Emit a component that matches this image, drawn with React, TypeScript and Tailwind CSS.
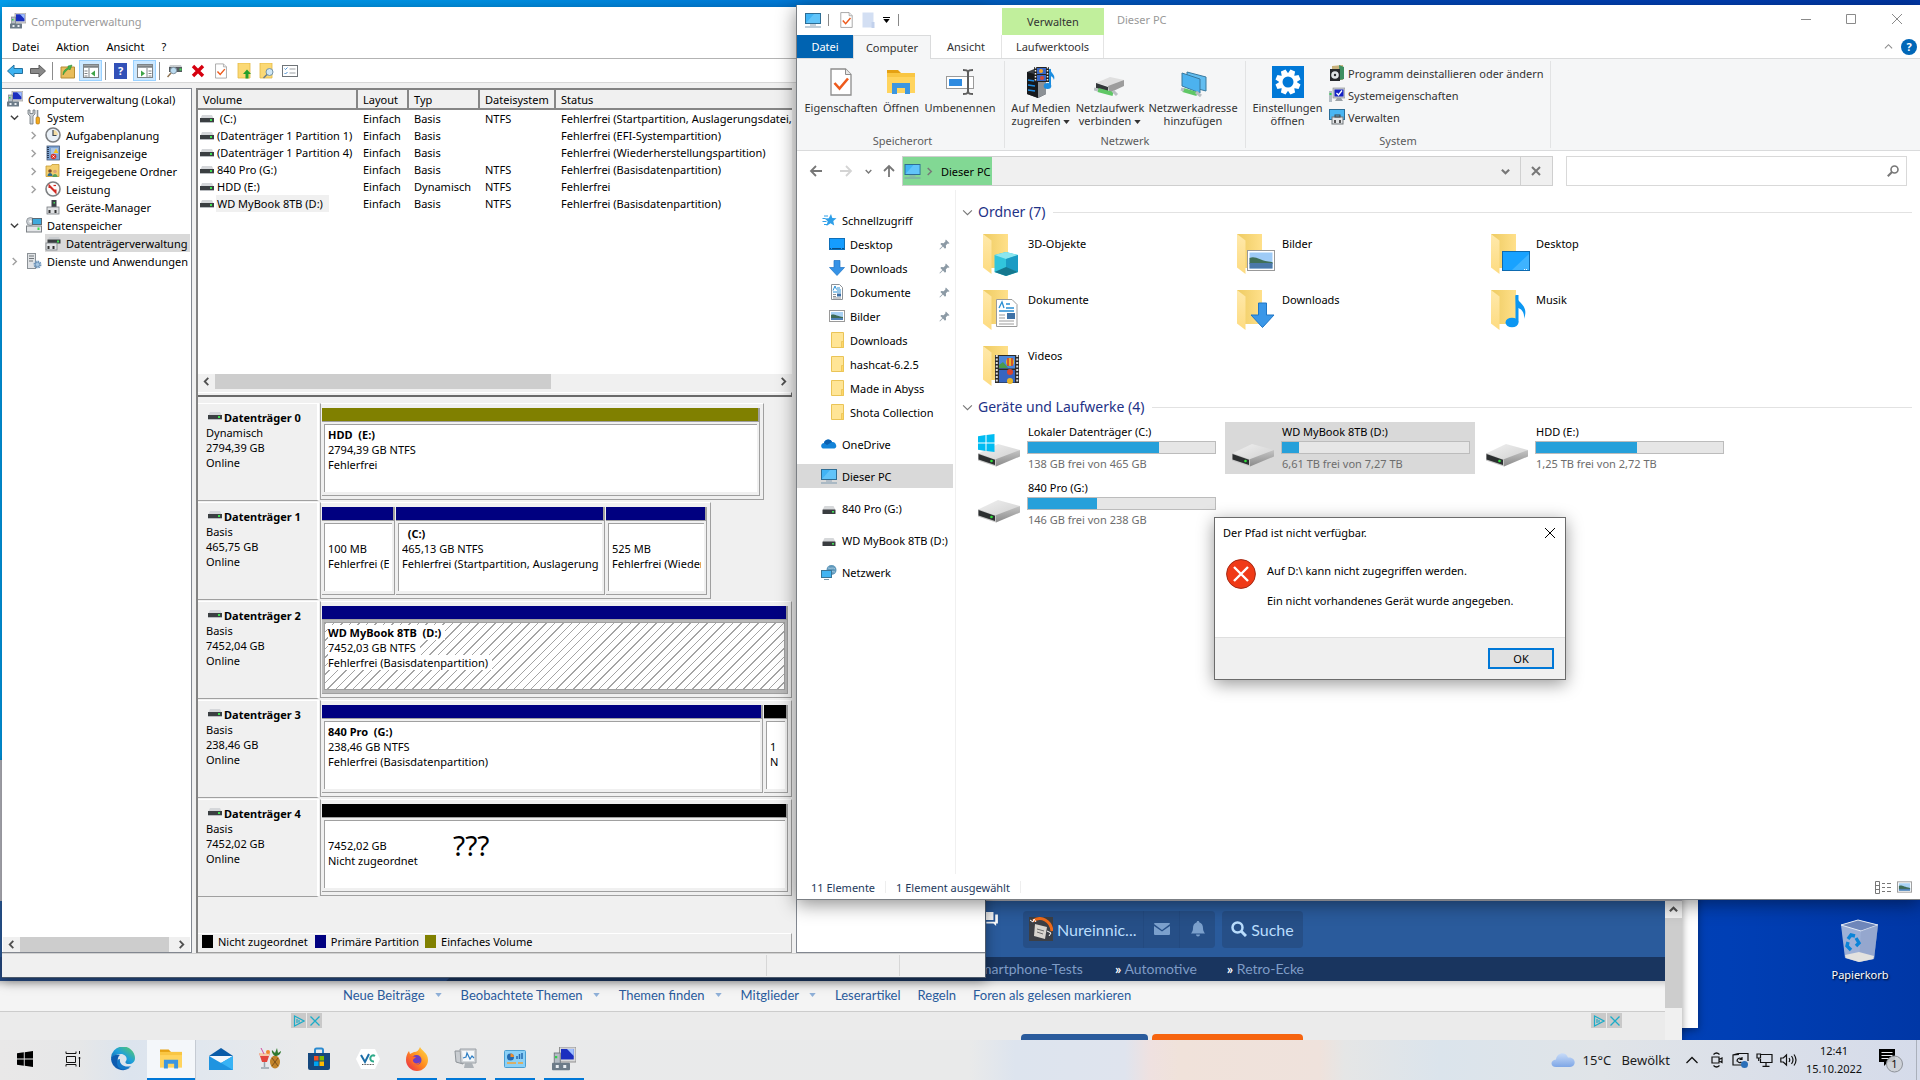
import type { ReactNode } from "react";

/* ---------- small shared icons ---------- */

type P = { className?: string };

const MiniDrive = ({ className = "" }: P) => (
  <svg viewBox="0 0 14 10" className={`h-[10px] w-[14px] shrink-0 ${className}`} aria-hidden="true">
    <path d="M2 1h10l1.500 3.500H.5z" fill="#d5d7da" />
    <rect x="0" y="4" width="14" height="4" fill="#3b3f42" />
    <rect x="0" y="8" width="14" height="1" fill="#b9bcc0" />
    <rect x="10" y="5" width="2" height="2" fill="#3fe052" />
  </svg>
);

const SmallDrive = ({ className = "" }: P) => (
  <svg viewBox="0 0 16 16" className={`h-4 w-4 shrink-0 ${className}`} aria-hidden="true">
    <path d="M3.500 6h9l2 4h-13z" fill="#d6d8da" />
    <rect x="1.500" y="9.500" width="13" height="4.500" rx=".6" fill="#3a3d40" />
    <rect x="11" y="11" width="2" height="1.600" fill="#43e05a" />
  </svg>
);

const BigDrive = ({ windows = false }: { windows?: boolean }) => (
  <svg viewBox="0 0 48 48" className="h-12 w-12 shrink-0" aria-hidden="true">
    <defs>
      <linearGradient id="dtop" x1="0" y1="0" x2="1" y2="1">
        <stop offset="0" stopColor="#f1f1f1" />
        <stop offset="1" stopColor="#cfcfcf" />
      </linearGradient>
      <linearGradient id="dside" x1="0" y1="0" x2="0" y2="1">
        <stop offset="0" stopColor="#c4c4c4" />
        <stop offset="1" stopColor="#8b8b8b" />
      </linearGradient>
    </defs>
    <path d="M2 31.500 22 22l22 6-19.500 11z" fill="url(#dtop)" />
    <path d="M19 37.500 44 28v6.500L20 44.500z" fill="url(#dside)" />
    <path d="M2 31l18 6.500v7L2 38.500z" fill="#c6c6c6" />
    <path d="M2.500 32l16.500 5.700v5.300L2.500 37.500z" fill="#2c2f30" />
    <circle cx="15.500" cy="39" r="1.300" fill="#2ee03a" />
    {windows && (
      <path d="M2 14.200l7.500-1.200v7.500H2zM10.500 12.900 18.500 12v8.500h-8zM2 21.500h7.500V29L2 27.800zM10.500 21.500h8V30l-8-1z" fill="#00bcf2" />
    )}
  </svg>
);

const Monitor = ({ className = "h-4 w-4" }: P) => (
  <svg viewBox="0 0 16 16" className={`shrink-0 ${className}`} aria-hidden="true">
    <rect x=".5" y="1.500" width="15" height="10" fill="#41b4f5" stroke="#2e6d94" />
    <path d="M1 11 9 2h6v9z" fill="#6fcbfb" opacity=".7" />
    <rect x="5" y="12.500" width="6" height="1" fill="#8ba2b5" />
    <rect x="0" y="14.500" width="16" height="1" fill="#7d99b0" />
  </svg>
);

const ComputerMgmt = ({ className = "h-4 w-4" }: P) => (
  <svg viewBox="0 0 16 16" className={`shrink-0 ${className}`} aria-hidden="true">
    <rect x="5" y="0" width="11" height="10" fill="#d9d9d9" stroke="#8a8a8a" strokeWidth=".6" />
    <rect x="6" y="1.300" width="8.500" height="7" fill="#1b2fbf" />
    <path d="M10 1.300h4.500V6z" fill="#9fc0ff" />
    <rect x="1.500" y="4" width="4" height="7" fill="#b4bcc4" stroke="#6d757c" strokeWidth=".6" />
    <rect x="2" y="6" width="1.500" height="1.500" fill="#32d14a" />
    <rect x="0" y="10.500" width="12" height="5" rx=".6" fill="#6c7b88" />
    <rect x="2.500" y="12" width="2" height="2" fill="#e9eef2" />
    <rect x="7.500" y="12" width="2" height="2" fill="#e9eef2" />
  </svg>
);

const Folder = ({ className = "h-4 w-4" }: P) => (
  <svg viewBox="0 0 16 16" className={`shrink-0 ${className}`} aria-hidden="true">
    <path d="M2.500.5h12v15h-12z" fill="#ffe596" stroke="#eac457" />
    <path d="M12.500 9.500h2v6h-2z" fill="#ffd767" stroke="#eac457" strokeWidth=".8" />
  </svg>
);

const BigFolder = ({ children }: { children: ReactNode }) => (
  <svg viewBox="0 0 48 48" className="h-12 w-12 shrink-0" aria-hidden="true">
    <defs>
      <linearGradient id="fback" x1="0" y1="0" x2="1" y2="0">
        <stop offset="0" stopColor="#eecb62" />
        <stop offset="1" stopColor="#ffe08a" />
      </linearGradient>
      <linearGradient id="ffront" x1="0" y1="0" x2="0" y2="1">
        <stop offset="0" stopColor="#ffe9ab" />
        <stop offset="1" stopColor="#fddb80" />
      </linearGradient>
    </defs>
    <path d="M7 4h25v34H12z" fill="url(#fback)" />
    <path d="M7 4l8.500 6.500V44L7 37.500z" fill="url(#ffront)" />
    {children}
  </svg>
);

const ArrowDown = ({ className = "h-4 w-4" }: P) => (
  <svg viewBox="0 0 16 16" className={`shrink-0 ${className}`} aria-hidden="true">
    <path d="M5 .5h6v7h4.500L8 15.500.5 7.500H5z" fill="#3592e6" stroke="#1d73c4" strokeWidth=".7" />
  </svg>
);

const Picture = ({ className = "h-4 w-4" }: P) => (
  <svg viewBox="0 0 16 16" className={`shrink-0 ${className}`} aria-hidden="true">
    <rect x=".5" y="2.500" width="15" height="11" fill="#fff" stroke="#9a9a9a" />
    <rect x="2" y="4" width="12" height="8" fill="#a9d2f5" />
    <path d="M2 7c3-1.500 5 1 12 2v1.500H2z" fill="#3e6b56" />
    <rect x="2" y="10" width="12" height="2" fill="#4f81b5" />
  </svg>
);

const DocIcon = ({ className = "h-4 w-4" }: P) => (
  <svg viewBox="0 0 16 16" className={`shrink-0 ${className}`} aria-hidden="true">
    <path d="M2.500.5h8l3 3v12h-11z" fill="#fff" stroke="#8d9297" />
    <path d="M4 6.500 6 2l1.500 3.500M8 4h3M8 6h4M4 8h8" stroke="#2a8fd4" fill="none" />
    <path d="M4 10.500h3M4 12.500h3M4 14h8" stroke="#8d9297" />
    <rect x="8" y="9.500" width="4" height="3" fill="#3a6ea5" />
  </svg>
);

const DesktopIcon = ({ className = "h-4 w-4" }: P) => (
  <svg viewBox="0 0 16 16" className={`shrink-0 ${className}`} aria-hidden="true">
    <rect x=".5" y="2.500" width="15" height="11" fill="#159dff" stroke="#0f6fb8" />
    <path d="M1 12.500h14" stroke="#0b4f86" strokeDasharray="1 1 8 0" />
  </svg>
);

const CheckDoc = ({ className = "h-4 w-4" }: P) => (
  <svg viewBox="0 0 22 28" className={`shrink-0 ${className}`} aria-hidden="true">
    <path d="M1 1h14.500L21 6.500V27H1z" fill="#fff" stroke="#8d8d8d" strokeWidth="1.300" />
    <path d="M15.500 1v5.500H21" fill="#e8e8e8" stroke="#8d8d8d" />
    <path d="M4.500 15l5 5.500L18 10.500" fill="none" stroke="#ee5a1c" strokeWidth="2.600" />
  </svg>
);

const Pin = () => (
  <svg viewBox="0 0 12 12" className="h-[11px] w-[11px] shrink-0" aria-hidden="true">
    <path d="M7.500.5l4 4-1.200.6-.8-.2-2 2 .2 2.600-1.200 1L4.300 8.300 1 11.500l-.5-.5 3.200-3.300-2.200-2.200 1-1.200 2.600.2 2-2-.2-.8z" fill="#8c9aa5" />
  </svg>
);

const Chevron = ({ dir, className = "h-[9px] w-[9px]" }: { dir: "right" | "down" | "left" | "up"; className?: string }) => {
  const d = { right: "M3 1l4 4-4 4", left: "M7 1L3 5l4 4", down: "M1 3l4 4 4-4", up: "M1 7l4-4 4 4" }[dir];
  return (
    <svg viewBox="0 0 10 10" className={`shrink-0 ${className}`} fill="none" stroke="currentColor" strokeWidth="1.600" aria-hidden="true">
      <path d={d} />
    </svg>
  );
};

const Caret = ({ className = "" }: P) => (
  <svg viewBox="0 0 8 5" className={`inline-block h-1 w-[7px] shrink-0 ${className}`} aria-hidden="true">
    <path d="M0 0h8L4 5z" fill="currentColor" />
  </svg>
);

/* ---------- scroll bar ---------- */

const HScroll = ({ thumb, className = "" }: { thumb: string; className?: string }) => (
  <div className={`flex h-[15px] shrink-0 items-stretch bg-[#f0f0f0] text-[#505050] ${className}`}>
    <button aria-label="Nach links" className="flex w-[17px] items-center justify-center"><Chevron dir="left" className="h-[9px] w-[9px] [stroke-width:2]" /></button>
    <div className="flex-1"><div className={`h-full bg-[#cdcdcd] ${thumb}`} /></div>
    <button aria-label="Nach rechts" className="flex w-[17px] items-center justify-center"><Chevron dir="right" className="h-[9px] w-[9px] [stroke-width:2]" /></button>
  </div>
);

/* ---------- Computerverwaltung ---------- */

const treeIcons: Record<string, ReactNode> = {
  system: (
    <svg viewBox="0 0 16 16" className="h-4 w-4 shrink-0"><path d="M2 1v4l2 2v8h3V7l2-2V1L7 1v3.500H4V1z" fill="#c9ced2" stroke="#6f767c" strokeWidth=".8" /><path d="M11.500 1v7" stroke="#8a9096" strokeWidth="1.600" /><rect x="10" y="8" width="3.500" height="7" rx="1.200" fill="#f3a81c" stroke="#a96c05" strokeWidth=".6" /></svg>
  ),
  clock: (
    <svg viewBox="0 0 16 16" className="h-4 w-4 shrink-0"><circle cx="8" cy="8" r="7" fill="#e9f0f7" stroke="#7c7f82" strokeWidth="1.600" /><path d="M8 8h5A5 5 0 0 0 8 3z" fill="#f3dca4" /><path d="M8 3v5.500h3.500" stroke="#404a55" fill="none" strokeWidth="1.200" /></svg>
  ),
  event: (
    <svg viewBox="0 0 16 16" className="h-4 w-4 shrink-0"><rect x="2" y="1" width="12.500" height="14" fill="#7da4d3" stroke="#44597a" strokeWidth=".8" /><path d="M3 2v12" stroke="#283c58" strokeWidth="2" strokeDasharray="1 1" /><path d="M6 4h7M6 6h7M6 8h7" stroke="#d8e7f8" /><path d="M11 3.500l2.500 4.500h-5z" fill="#f6c21c" /><circle cx="8.500" cy="11.500" r="2.800" fill="#d9352c" /><path d="M7.500 10.500l2 2m0-2l-2 2" stroke="#fff" strokeWidth=".9" /></svg>
  ),
  shared: (
    <svg viewBox="0 0 16 16" className="h-4 w-4 shrink-0"><path d="M1 3h5l1-1.500h7v12H1z" fill="#f4cf6e" stroke="#c79a30" strokeWidth=".8" /><circle cx="5" cy="8" r="1.800" fill="#7c4d2c" /><path d="M2.500 13c0-4 5-4 5 0z" fill="#2f6d8f" /><circle cx="10" cy="8.500" r="1.800" fill="#d8a577" /><path d="M7.500 14c0-4 5-4 5 0z" fill="#58a05c" /></svg>
  ),
  perf: (
    <svg viewBox="0 0 16 16" className="h-4 w-4 shrink-0"><circle cx="8" cy="8" r="7" fill="#fbfbfb" stroke="#7c7f82" strokeWidth="1.600" /><path d="M4.500 7V5L10.500 11V8.500" stroke="#d12a23" strokeWidth="2" fill="none" /><path d="M8.500 4.500h2.500" stroke="#d12a23" strokeWidth="1.200" /></svg>
  ),
  device: (
    <svg viewBox="0 0 16 16" className="h-4 w-4 shrink-0"><rect x="6.500" y="1" width="5" height="7" fill="#3b4146" /><rect x="8.500" y="3" width="1.500" height="1.500" fill="#43df57" /><rect x="2" y="8" width="12" height="7" fill="#dfe1e3" stroke="#74797e" strokeWidth=".8" /><path d="M4.500 11v3M10.500 11v3" stroke="#333" strokeWidth="2" /></svg>
  ),
  storage: (
    <svg viewBox="0 0 16 16" className="h-4 w-4 shrink-0"><circle cx="4.500" cy="4.500" r="4" fill="#c7ccd1" stroke="#7b8288" strokeWidth=".7" /><circle cx="4.500" cy="4.500" r="1.200" fill="#fff" /><rect x="6.500" y="1.500" width="9" height="6" fill="#3fa9dc" stroke="#5b6a76" /><rect x=".5" y="9" width="15" height="6" fill="#e4e6e8" stroke="#7c8186" /><rect x="11.500" y="10.500" width="2" height="2.500" fill="#3ddc4f" /></svg>
  ),
  disk: (
    <svg viewBox="0 0 16 16" className="h-4 w-4 shrink-0"><path d="M4 2h10l1 2.500H3z" fill="#c9cccf" /><rect x="2.500" y="4.500" width="13" height="4" fill="#3a3e41" /><rect x="12" y="5.500" width="2" height="2" fill="#43df57" /><rect x="1" y="8" width="11" height="7" fill="#e2e4e6" stroke="#7c8186" strokeWidth=".8" /><path d="M3.500 11v3M8.500 11v3" stroke="#333" strokeWidth="2" /></svg>
  ),
  services: (
    <svg viewBox="0 0 16 16" className="h-4 w-4 shrink-0"><rect x="1.500" y=".5" width="8" height="15" fill="#e0e3e6" stroke="#8b9196" /><path d="M3 3h5M3 5.500h5M3 8h4" stroke="#70767b" /><circle cx="11.500" cy="11.500" r="3" fill="none" stroke="#6d95bb" strokeWidth="2" strokeDasharray="1.500 .8" /><circle cx="11.500" cy="11.500" r="2.200" fill="#a8c7e2" stroke="#6d95bb" /></svg>
  ),
};

type TreeRow = { label: string; icon: string; level: 1 | 2; open?: boolean; closed?: boolean; active?: boolean };
const tree: TreeRow[] = [
  { label: "System", icon: "system", level: 1, open: true },
  { label: "Aufgabenplanung", icon: "clock", level: 2, closed: true },
  { label: "Ereignisanzeige", icon: "event", level: 2, closed: true },
  { label: "Freigegebene Ordner", icon: "shared", level: 2, closed: true },
  { label: "Leistung", icon: "perf", level: 2, closed: true },
  { label: "Geräte-Manager", icon: "device", level: 2 },
  { label: "Datenspeicher", icon: "storage", level: 1, open: true },
  { label: "Datenträgerverwaltung", icon: "disk", level: 2, active: true },
  { label: "Dienste und Anwendungen", icon: "services", level: 1, closed: true },
];

const Tree = () => (
  <nav className="flex w-[190px] shrink-0 flex-col border border-l-0 border-[#828790] bg-white pl-px pr-px pt-px">
    <ul className="flex-1 overflow-hidden whitespace-nowrap">
      <li className="flex h-[18px] items-center gap-[5px] pl-1"><ComputerMgmt />Computerverwaltung (Lokal)</li>
      {tree.map((r) => (
        <li key={r.label} className={`flex h-[18px] items-center ${r.level === 2 ? "pl-[19px]" : ""}`}>
          <span className="flex w-[23px] shrink-0 justify-center">
            {r.open && <Chevron dir="down" className="h-[9px] w-[9px] text-[#404040]" />}
            {r.closed && <Chevron dir="right" className="h-[9px] w-[9px] text-[#a0a0a0]" />}
          </span>
          <span className={`flex h-[18px] flex-1 items-center gap-[5px] ${r.active ? "bg-[#d9d9d9]" : ""}`}>
            {treeIcons[r.icon]}
            {r.label}
          </span>
        </li>
      ))}
    </ul>
    <HScroll thumb="w-[149px]" />
  </nav>
);

const volumes = [
  [" (C:)", "Basis", "NTFS", "Fehlerfrei (Startpartition, Auslagerungsdatei, Absturzabbild)"],
  ["(Datenträger 1 Partition 1)", "Basis", "", "Fehlerfrei (EFI-Systempartition)"],
  ["(Datenträger 1 Partition 4)", "Basis", "", "Fehlerfrei (Wiederherstellungspartition)"],
  ["840 Pro (G:)", "Basis", "NTFS", "Fehlerfrei (Basisdatenpartition)"],
  ["HDD (E:)", "Dynamisch", "NTFS", "Fehlerfrei"],
  ["WD MyBook 8TB (D:)", "Basis", "NTFS", "Fehlerfrei (Basisdatenpartition)"],
];

const VolumeTable = () => (
  <div className="flex-1 overflow-hidden">
    <table className="w-full table-fixed border-collapse whitespace-nowrap text-left">
      <colgroup>
        <col className="w-[159px]" /><col className="w-[51px]" /><col className="w-[71px]" /><col className="w-[76px]" /><col />
      </colgroup>
      <thead>
        <tr className="h-[19px]">
          {["Volume", "Layout", "Typ", "Dateisystem", "Status"].map((h) => (
            <th key={h} className="border-b-2 border-r-2 border-[#868686] bg-[#f0f0f0] p-0 pl-[5px] font-normal last:border-r-0">{h}</th>
          ))}
        </tr>
      </thead>
      <tbody>
        {volumes.map(([name, type, fs, status], i) => (
          <tr key={name} className="h-[17px]">
            <td className="p-0">
              <span className="flex items-center gap-[2px] pl-[2px]">
                <MiniDrive />
                <span className={`whitespace-pre pl-px leading-[17px] ${i === 5 ? "bg-[#f0f0f0] pr-[6px]" : ""}`}>{name}</span>
              </span>
            </td>
            <td className="p-0 pl-[6px]">Einfach</td>
            <td className="p-0 pl-[6px]">{type}</td>
            <td className="p-0 pl-[6px]">{fs}</td>
            <td className="overflow-hidden p-0 pl-[6px]">{status}</td>
          </tr>
        ))}
      </tbody>
    </table>
  </div>
);

type Part = { bar: string; size: string; title?: string; lines: string[]; hatch?: boolean; extra?: boolean };
type Disk = { name: string; kind: string; size: string; width: string; parts: Part[] };
const disks: Disk[] = [
  { name: "Datenträger 0", kind: "Dynamisch", size: "2794,39 GB", width: "w-[444px]", parts: [{ bar: "bg-[#808000]", size: "min-w-0 flex-1", title: "HDD  (E:)", lines: ["2794,39 GB NTFS", "Fehlerfrei"] }] },
  {
    name: "Datenträger 1", kind: "Basis", size: "465,75 GB", width: "w-[391px]", parts: [
      { bar: "bg-[#000080]", size: "w-[73px]", lines: ["100 MB", "Fehlerfrei (EFI-Systempartition)"] },
      { bar: "bg-[#000080]", size: "w-[209px]", title: "  (C:)", lines: ["465,13 GB NTFS", "Fehlerfrei (Startpartition, Auslagerungsdatei)"] },
      { bar: "bg-[#000080]", size: "min-w-0 flex-1", lines: ["525 MB", "Fehlerfrei (Wiederherstellung)"] },
    ],
  },
  { name: "Datenträger 2", kind: "Basis", size: "7452,04 GB", width: "flex-1", parts: [{ bar: "bg-[#000080]", size: "min-w-0 flex-1", title: "WD MyBook 8TB  (D:)", lines: ["7452,03 GB NTFS", "Fehlerfrei (Basisdatenpartition)"], hatch: true }] },
  {
    name: "Datenträger 3", kind: "Basis", size: "238,46 GB", width: "flex-1", parts: [
      { bar: "bg-[#000080]", size: "min-w-0 flex-1", title: "840 Pro  (G:)", lines: ["238,46 GB NTFS", "Fehlerfrei (Basisdatenpartition)"] },
      { bar: "bg-black", size: "w-[24px]", lines: ["1", "N"] },
    ],
  },
  { name: "Datenträger 4", kind: "Basis", size: "7452,02 GB", width: "flex-1", parts: [{ bar: "bg-black", size: "min-w-0 flex-1", lines: ["7452,02 GB", "Nicht zugeordnet"], extra: true }] },
];

const Partition = ({ p }: { p: Part }) => (
  <div className={`flex flex-col ${p.size}`}>
    <div className={`h-[13px] border-r-2 border-[#a0a0a0] ${p.bar}`} />
    <div className={`flex flex-1 border-b border-r border-t border-[#a0a0a0] p-[2px] pb-[3px] ${p.hatch ? "bg-[#b9b9b9]" : ""}`}>
      <div className={`relative min-w-0 flex-1 overflow-hidden whitespace-pre border-l border-t border-[#a0a0a0] pl-[3px] pt-[2px] ${p.hatch ? "border-b border-r bg-[repeating-linear-gradient(135deg,#a4a4a4_0px,#a4a4a4_1px,#ffffff_1px,#ffffff_6px)]" : "bg-white"}`}>
        <div className="mr-[3px] flex flex-col items-start overflow-hidden">
          <b className={`min-h-[15px] leading-[15px] ${p.hatch ? "bg-white pr-1" : ""}`}>{p.title}</b>
          {p.lines.map((l) => <span key={l} className={`leading-[15px] ${p.hatch ? "bg-white pr-1" : ""}`}>{l}</span>)}
        </div>
        {p.extra && <span className="absolute left-[128px] top-[7px] text-[28px] leading-[34px]">???</span>}
      </div>
    </div>
  </div>
);

const DiskRow = ({ d }: { d: Disk }) => (
  <div className="mb-px flex h-[98px]">
    <div className="w-[121px] border-b border-r-2 border-t border-b-[#a0a0a0] border-r-white border-t-white pl-2 pt-[6px]">
      <div className="flex items-center gap-[2px] pl-[2px]"><MiniDrive className="mb-[4px]" /><b className="leading-[15px]">{d.name}</b></div>
      <div className="leading-[15px]">{d.kind}</div>
      <div className="leading-[15px]">{d.size}</div>
      <div className="leading-[15px]">Online</div>
    </div>
    <div className={`ml-px flex h-[97px] gap-px border border-[#a0a0a0] border-t-white pb-[3px] pl-px pr-[3px] pt-1 ${d.width}`}>
      {d.parts.map((p, i) => <Partition key={i} p={p} />)}
    </div>
  </div>
);

const ToolSep = () => <span className="mx-[3px] h-[18px] w-px bg-[#8c8c8c]" />;
const Tool = ({ label, on, children }: { label: string; on?: boolean; children: ReactNode }) => (
  <button aria-label={label} className={`flex h-[21px] w-[23px] items-center justify-center ${on ? "border border-[#99d1ff] bg-[#cce8ff]" : ""}`}>{children}</button>
);
const PanelIcon = ({ flip }: { flip?: boolean }) => (
  <svg viewBox="0 0 16 14" className="h-[14px] w-4">
    <rect x=".5" y=".5" width="15" height="13" fill="#fff" stroke="#7e8386" /><path d="M1 2.500h14" stroke="#7e8386" strokeWidth="2.500" />
    {flip
      ? <><path d="M4 6.500l4 3-4 3z" fill="#3fa548" /><path d="M10 4v10M11.500 7h3M11.500 9.500h3M11.500 12h3" stroke="#7e8386" /></>
      : <><path d="M12 6.500l-4 3 4 3z" fill="#3fa548" /><path d="M6 4v10M1.500 7h3M1.500 9.500h3M1.500 12h3" stroke="#7e8386" /></>}
  </svg>
);

const ToolBar = () => (
  <div className="flex h-6 items-center border-b border-[#d7d7d7] pl-px">
    <Tool label="Zurück"><svg viewBox="0 0 16 14" className="h-[14px] w-4"><path d="M.5 7 7 1v3.500h8.500v5H7V13z" fill="#3db2f0" stroke="#24719e" /></svg></Tool>
    <Tool label="Vorwärts"><svg viewBox="0 0 16 14" className="h-[14px] w-4"><path d="M15.500 7 9 1v3.500H.5v5H9V13z" fill="#888" stroke="#5d5d5d" /></svg></Tool>
    <ToolSep />
    <Tool label="Nach oben"><svg viewBox="0 0 16 16" className="h-4 w-4"><path d="M1 4h13.500v11H1z" fill="#e8bd5c" stroke="#b68c32" /><path d="M3 12C3 8 5 6 8 5V3l4-1-2 5-1-1c-2 .5-4 3-6 6z" fill="#44b649" stroke="#2c8031" strokeWidth=".5" /></svg></Tool>
    <Tool label="Konsolenstruktur" on><PanelIcon /></Tool>
    <ToolSep />
    <Tool label="Hilfe"><span className="flex h-4 w-[13px] items-center justify-center bg-[#3251b8] font-bold text-white">?</span></Tool>
    <span className="w-px" />
    <Tool label="Aktionsbereich" on><PanelIcon flip /></Tool>
    <ToolSep />
    <Tool label="Verbinden"><svg viewBox="0 0 16 14" className="h-[14px] w-4"><path d="M2 3h13v5H2z" fill="#555b60" /><path d="M3 1h11l1 2H2z" fill="#c9ccce" /><rect x="12.500" y="4.500" width="2" height="2" fill="#43df57" /><circle cx="6.500" cy="6.500" r="3.200" fill="#bcdcf1" stroke="#7d8f9c" /><path d="M4 9l-3.500 4" stroke="#8f7351" strokeWidth="1.500" /></svg></Tool>
    <Tool label="Löschen"><svg viewBox="0 0 14 14" className="h-[14px] w-[14px]"><path d="M2 2l10 10M12 2L2 12" stroke="#d6000f" strokeWidth="3.400" /></svg></Tool>
    <Tool label="Eigenschaften"><CheckDoc className="h-4 w-3" /></Tool>
    <Tool label="Ordner hoch"><svg viewBox="0 0 16 16" className="h-4 w-4"><path d="M2 0h12v15H2z" fill="#fbd975" stroke="#e5b944" strokeWidth=".8" /><path d="M11 6.500l4 4.500h-2.500v4.500h-3V11H7z" fill="#24a02c" /></svg></Tool>
    <Tool label="Ordner suchen"><svg viewBox="0 0 16 16" className="h-4 w-4"><path d="M1 0h12v15H1z" fill="#fbd975" stroke="#e5b944" strokeWidth=".8" /><circle cx="10.500" cy="9" r="3.500" fill="#cfe7f5" stroke="#7593a8" /><path d="M8 11.500 4.500 15" stroke="#6c7e8b" strokeWidth="1.500" /></svg></Tool>
    <Tool label="Liste"><svg viewBox="0 0 16 12" className="h-3 w-4"><rect x=".5" y=".5" width="15" height="11" fill="#fff" stroke="#6f7478" /><path d="M2.500 3.500l1 1 2-2M2.500 8l1 1 2-2" stroke="#4b8fd0" fill="none" /><path d="M7.500 4h6M7.500 8h6" stroke="#9a9fa3" /></svg></Tool>
  </div>
);

const ManagementWindow = () => (
  <section aria-label="Computerverwaltung" className="absolute bottom-[102px] left-[2px] top-[7px] flex w-[984px] flex-col border-b border-r border-[#4d5a6b] bg-[#f0f0f0] shadow-[0_3px_12px_rgba(0,0,0,0.4)]">
    <div className="bg-white">
      <header className="flex h-7 items-center gap-[5px] pl-2 text-[#999999]"><ComputerMgmt />Computerverwaltung</header>
      <div className="flex h-[24px] items-center gap-[17px] border-b border-[#b3b3b3] pl-[10px]">
        <button>Datei</button><button>Aktion</button><button>Ansicht</button><button>?</button>
      </div>
      <ToolBar />
    </div>
    <div className="flex min-h-0 flex-1 gap-1 border-b border-[#d0d0d0] pt-[5px]">
      <Tree />
      <div className="flex w-[596px] flex-col border-l-2 border-t-2 border-[#828282]">
        <div className="flex h-[302px] shrink-0 flex-col bg-white">
          <VolumeTable />
          <HScroll thumb="w-[60%]" />
          <div className="h-[3px] bg-[#f0f0f0]" />
        </div>
        <div className="flex h-[5px] shrink-0 border-b-2 border-r border-t border-b-[#696969] border-r-[#696969] border-t-white bg-[#f0f0f0]" />
        <div className="flex-1 pt-[6px]">
          {disks.map((d) => <DiskRow key={d.name} d={d} />)}
        </div>
        <div className="flex h-5 items-center border-b border-r border-t border-b-[#a0a0a0] border-r-[#a0a0a0] border-t-white pb-[3px] pl-1">
          <span className="mr-[5px] h-[13px] w-[11px] bg-black" />Nicht zugeordnet
          <span className="ml-[7px] mr-[5px] h-[13px] w-[11px] bg-[#000080]" />Primäre Partition
          <span className="ml-[6px] mr-[5px] h-[13px] w-[11px] bg-[#808000]" />Einfaches Volume
        </div>
      </div>
      <aside className="flex-1 border border-r-0 border-[#828790] bg-white" />
    </div>
    <footer className="flex h-[23px] shrink-0 justify-end py-px">
      <span className="w-[133px] border-l border-[#d7d7d7]" /><span className="w-[86px] border-l border-[#d7d7d7]" />
    </footer>
  </section>
);

/* ---------- Explorer ---------- */

const RibbonButton = ({ icon, lines, width, caret }: { icon: ReactNode; lines: string[]; width: string; caret?: boolean }) => (
  <button className={`flex flex-col items-center whitespace-nowrap pt-[5px] leading-[13px] ${width}`}>
    <span className="mb-[3px] flex h-8 items-center justify-center">{icon}</span>
    {lines.map((l, i) => <span key={l}>{l}{caret && i === 1 && <Caret className="ml-[3px] align-middle" />}</span>)}
  </button>
);

const RibbonGroup = ({ label, width, children }: { label: string; width: string; children: ReactNode }) => (
  <div className={`my-[2px] flex flex-col justify-between border-r border-[#e2e3e4] ${width}`}>
    <div className="flex">{children}</div>
    <div className="text-center leading-[15px] text-[#5b5b5b]">{label}</div>
  </div>
);

const OpenFolder = ({ className = "h-[28px] w-[28px]" }: P) => (
  <svg viewBox="0 0 28 28" className={className} aria-hidden="true">
    <path d="M0 2h11l3 3H0z" fill="#e5a113" /><path d="M0 5h28v20H0z" fill="#ffd45e" /><path d="M0 5h28v4H0z" fill="#f9c643" />
    <path d="M5 26V15h18v11h-5v-6h-8v6z" fill="#3c96e0" />
  </svg>
);

const Gear = () => (
  <svg viewBox="0 0 32 32" className="h-8 w-8" aria-hidden="true">
    <rect width="32" height="32" fill="#0078d7" />
    <g fill="#fff">
      {[0, 45, 90, 135, 180, 225, 270, 315].map((a) => <path key={a} d="M13.500 3.500h5l1 5h-7z" transform={`rotate(${a + 22.500} 16 16)`} />)}
      <circle cx="16" cy="16" r="9" />
    </g>
    <circle cx="16" cy="16" r="5.500" fill="#0078d7" />
  </svg>
);

const MediaIcon = () => (
  <svg viewBox="0 0 32 32" className="h-8 w-8" aria-hidden="true">
    <path d="M2 6l12-5 7 3v24l-8 4-11-4z" fill="#3a3f45" /><path d="M13 9l8-4v23l-8 4z" fill="#8c9196" /><path d="M2 6l11 3v23L2 28z" fill="#17191c" />
    <path d="M3 14l7 1M3 19l7 1M3 24l7 1" stroke="#1f8be0" strokeWidth="1.500" />
    <rect x="9" y="1" width="15" height="15" fill="#222" /><path d="M10.500 1v15M22.500 1v15" stroke="#eee" strokeWidth="1.500" strokeDasharray="1.500 1.500" />
    <rect x="12" y="2" width="9" height="6" fill="#3768c8" /><rect x="12" y="9" width="9" height="6" fill="#3768c8" /><circle cx="16" cy="5" r="2" fill="#f4a42a" /><circle cx="17" cy="12" r="2" fill="#d64a34" />
    <path d="M25 3v16" stroke="#1b8de0" strokeWidth="2" /><path d="M25 2c0 5 6 6 4 12-1-4-4-4-4-4z" fill="#1b8de0" /><ellipse cx="22.500" cy="20" rx="3.800" ry="3" fill="#1b8de0" />
  </svg>
);

const NetDriveIcon = () => (
  <svg viewBox="0 0 32 32" className="h-8 w-8" aria-hidden="true">
    <path d="M2 17 16 11l14 3-13 7z" fill="#dfdfdf" /><path d="M14 20l16-6v6l-15 7z" fill="#9d9d9d" /><path d="M2 17l12 4v6L2 22z" fill="#33373a" />
    <path d="M4 24l15 4" stroke="#5fc765" strokeWidth="4" /><path d="M19 25l4 4" stroke="#b9bec2" strokeWidth="3" /><path d="M0 23l4 1" stroke="#b9bec2" strokeWidth="3" />
  </svg>
);

const NetAddressIcon = () => (
  <svg viewBox="0 0 32 32" className="h-8 w-8" aria-hidden="true">
    <path d="M10 6l19 5v14l-19-5z" fill="#62bdf0" stroke="#39799e" /><path d="M5 7l18 6v14L5 20z" fill="#4cb2ef" stroke="#39799e" />
    <path d="M6 24l14 4" stroke="#5fc765" strokeWidth="4" /><path d="M19 26l5 4" stroke="#b9bec2" strokeWidth="3" /><path d="M4 23l3 1" stroke="#b9bec2" strokeWidth="3" />
  </svg>
);

const ControlGlyph = ({ d }: { d: string }) => (
  <svg viewBox="0 0 10 10" className="h-[10px] w-[10px]" fill="none" stroke="currentColor" aria-hidden="true"><path d={d} /></svg>
);

const ExplorerTop = () => (
  <>
    <div className="flex h-[30px] items-start">
      <div className="flex h-[30px] w-[205px] items-center pl-2">
        <Monitor /><span className="ml-[7px] h-3 w-px bg-[#888]" />
        <button aria-label="Eigenschaften" className="ml-[11px]"><CheckDoc className="h-4 w-[13px]" /></button>
        <button aria-label="Neuer Ordner" className="ml-[9px]"><svg viewBox="0 0 13 16" className="h-4 w-[13px]"><path d="M.5.5h11v15H.5z" fill="#d3dff3" /><path d="M9.500 10h3v6h-3z" fill="#c2d1ec" /></svg></button>
        <button aria-label="Anpassen" className="ml-[8px] flex flex-col items-center gap-px text-black"><span className="h-px w-[7px] bg-black" /><Caret /></button>
        <span className="ml-[8px] h-3 w-px bg-[#888]" />
      </div>
      <div className="mt-[3px] flex h-[27px] w-[102px] items-center justify-center bg-[#c1ef9c] text-[#333]">Verwalten</div>
      <h1 className="ml-[13px] mt-[7px] flex-1 leading-[15px] text-[#999999]">Dieser PC</h1>
      <div className="flex text-[#8a8a8a]">
        <button aria-label="Minimieren" className="flex h-7 w-[45px] items-center justify-center"><ControlGlyph d="M0 5.500h10" /></button>
        <button aria-label="Maximieren" className="flex h-7 w-[46px] items-center justify-center"><ControlGlyph d="M.5.5h9v9h-9z" /></button>
        <button aria-label="Schließen" className="flex h-7 w-[46px] items-center justify-center"><ControlGlyph d="M0 0l10 10M10 0L0 10" /></button>
      </div>
    </div>
    <div className="flex h-[24px] items-stretch border-b border-[#dadbdc] text-[#333]">
      <button className="w-14 bg-[#0063b1] text-white">Datei</button>
      <button className="-mb-px w-[78px] border border-b-0 border-[#dadbdc] bg-[#f5f6f7]">Computer</button>
      <button className="w-[70px]">Ansicht</button>
      <button className="w-[103px] border-x border-[#e4e4e4]">Laufwerktools</button>
      <span className="flex-1" />
      <button aria-label="Menüband minimieren" className="px-2 text-[#8a8a8a]"><Chevron dir="up" className="h-[9px] w-[9px] [stroke-width:1.200]" /></button>
      <button aria-label="Hilfe" className="my-auto mr-[3px] flex h-4 w-4 items-center justify-center rounded-full bg-[#0067b8] font-bold text-white">?</button>
    </div>
    <div className="flex h-[92px] border-b border-[#dadbdc] bg-[#f5f6f7] pl-1 text-[#333]">
      <RibbonGroup label="Speicherort" width="w-[204px]">
        <RibbonButton width="w-20" lines={["Eigenschaften"]} icon={<CheckDoc className="h-7 w-[22px]" />} />
        <RibbonButton width="w-10" lines={["Öffnen"]} icon={<OpenFolder />} />
        <RibbonButton width="w-[78px]" lines={["Umbenennen"]} icon={
          <svg viewBox="0 0 28 26" className="h-[26px] w-7"><rect x=".5" y="7.500" width="27" height="12" fill="#fff" stroke="#9a9a9a" /><rect x="3" y="10" width="13" height="7" fill="#2f8be0" /><path d="M17 1c3 0 5 0 5 3v18c0 3-2 3-5 3M27 1c-3 0-5 0-5 3v18c0 3 2 3 5 3" fill="none" stroke="#5e5e5e" strokeWidth="2" /></svg>
        } />
      </RibbonGroup>
      <RibbonGroup label="Netzwerk" width="w-[241px]">
        <RibbonButton width="ml-[2px] w-[68px]" lines={["Auf Medien", "zugreifen"]} caret icon={<MediaIcon />} />
        <RibbonButton width="w-[70px]" lines={["Netzlaufwerk", "verbinden"]} caret icon={<NetDriveIcon />} />
        <RibbonButton width="w-[96px]" lines={["Netzwerkadresse", "hinzufügen"]} icon={<NetAddressIcon />} />
      </RibbonGroup>
      <RibbonGroup label="System" width="w-[305px]">
        <RibbonButton width="w-[83px]" lines={["Einstellungen", "öffnen"]} icon={<Gear />} />
        <div className="flex flex-col items-start whitespace-nowrap pt-px">
          <button className="flex h-[22px] items-center gap-[3px]">
            <svg viewBox="0 0 16 16" className="h-4 w-4"><path d="M3 1l11-1v15H3z" fill="#c9b27c" /><path d="M10 0l5 2v12l-4 1z" fill="#3d8f60" /><rect x="1" y="4" width="10" height="12" fill="#26292c" /><circle cx="6" cy="10" r="3.800" fill="#dfe3e6" /><circle cx="6" cy="10" r="1.200" fill="#26292c" /></svg>
            Programm deinstallieren oder ändern
          </button>
          <button className="flex h-[22px] items-center gap-[3px]">
            <svg viewBox="0 0 16 16" className="h-4 w-4"><rect x="0" y="4" width="3" height="11" fill="#b3bcc4" /><rect x=".500" y="6" width="2" height="2" fill="#35d34b" /><rect x="4" y="1" width="12" height="10" fill="#c9ccd0" stroke="#83888d" strokeWidth=".6" /><rect x="5.500" y="2.500" width="9" height="7" fill="#1522c4" /><path d="M7.500 6l2 2L13 3.500" stroke="#fff" fill="none" strokeWidth="1.300" /><path d="M6 14h8l-2-3H8z" fill="#9aa0a5" /></svg>
            Systemeigenschaften
          </button>
          <button className="flex h-[22px] items-center gap-[3px]">
            <svg viewBox="0 0 16 16" className="h-4 w-4"><rect x=".5" y=".5" width="15" height="10" fill="#49b6f3" stroke="#2b6e98" /><rect x="3" y="8" width="11" height="7" fill="#e4e6e8" stroke="#71767a" /><rect x="6" y="6" width="5" height="2" fill="none" stroke="#444" /><path d="M6 11v3M11 11v3" stroke="#333" strokeWidth="1.600" /></svg>
            Verwalten
          </button>
        </div>
      </RibbonGroup>
    </div>
  </>
);

const NavArrow = ({ d, label, className }: { d: string; label: string; className: string }) => (
  <button aria-label={label} className={className}>
    <svg viewBox="0 0 14 14" className="h-[14px] w-[14px]" fill="none" stroke="currentColor" strokeWidth="1.800"><path d={d} /></svg>
  </button>
);

const AddressRow = () => (
  <div className="flex items-center pb-1 pl-3 pr-[13px] pt-[5px] text-[#777]">
    <NavArrow label="Zurück" className="" d="M13 7H2M7 2L2 7l5 5" />
    <NavArrow label="Vorwärts" className="ml-4 text-[#d4d4d4]" d="M1 7h11M7 2l5 5-5 5" />
    <button aria-label="Verlauf" className="ml-3"><Chevron dir="down" className="h-[7px] w-[7px] [stroke-width:2]" /></button>
    <NavArrow label="Nach oben" className="ml-[10px] mr-[6px]" d="M7 13V2M2 7l5-5 5 5" />
    <div className="flex h-[30px] flex-[648] items-stretch border border-[#cfcfcf] bg-[#f0f0f0]">
      <div className="flex w-[89px] items-center overflow-hidden whitespace-nowrap bg-[#82d894] pl-px"><Monitor className="h-4 w-[17px]" /><Chevron dir="right" className="ml-[4px] mr-[7px] h-[9px] w-[9px]" /><span className="text-black">Dieser PC</span></div>
      <span className="flex-1" />
      <button aria-label="Verlauf öffnen" className="px-[10px]"><Chevron dir="down" className="h-[9px] w-[9px] [stroke-width:2.400]" /></button>
      <button aria-label="Abbrechen" className="flex w-8 items-center justify-center border-l border-[#d0d0d0]"><svg viewBox="0 0 10 10" className="h-[10px] w-[10px]" stroke="currentColor" strokeWidth="2"><path d="M1 1l8 8M9 1L1 9" /></svg></button>
    </div>
    <label className="ml-[13px] flex h-[30px] flex-[332] items-center border border-[#d9d9d9] bg-white pr-[7px]">
      <input type="text" aria-label="Durchsuchen" className="h-full min-w-0 flex-1 bg-transparent px-2 text-black outline-none" />
      <svg viewBox="0 0 12 12" className="h-3 w-3" fill="none" stroke="currentColor" strokeWidth="1.600"><circle cx="7.500" cy="4.500" r="3.500" /><path d="M5 7L.8 11.200" strokeWidth="2" /></svg>
    </label>
  </div>
);

const Star = () => (
  <svg viewBox="0 0 16 16" className="h-4 w-4 shrink-0"><path d="M10 2l1.300 4 4.200.3-3.200 2.800.9 4.400-3.700-2.300L5.500 14l1.200-4.700L3.500 6.500l4.300-.3z" fill="#2f9fe8" /><path d="M3 4h4M1.500 6.500h3M1.500 9.500h4M3 12.500h3" stroke="#2f9fe8" /></svg>
);
const Cloud = () => (
  <svg viewBox="0 0 16 16" className="h-4 w-4 shrink-0"><path d="M3 12.500C-1 12.500-.5 7 3 7c.5-3.500 6-5 8-1 4-.5 6 5.500 2.500 6.500z" fill="#1383d8" /><path d="M3 7c.5-3.500 6-5 8-1l-5 3z" fill="#0b60b0" /></svg>
);
const NetworkIcon = () => (
  <svg viewBox="0 0 16 16" className="h-4 w-4 shrink-0"><circle cx="10.500" cy="6" r="5" fill="#5f98bb" /><path d="M7 4c3 1 5-1 7 1M8 8c2-1 4 0 6 0" stroke="#a9cbe0" fill="none" /><rect x=".5" y="6.500" width="10" height="7" fill="#42b4f2" stroke="#3a7596" /><path d="M3 15.500h5" stroke="#7d98a9" /></svg>
);

const quick: [string, ReactNode, boolean][] = [
  ["Desktop", <DesktopIcon />, true],
  ["Downloads", <ArrowDown />, true],
  ["Dokumente", <DocIcon />, true],
  ["Bilder", <Picture />, true],
  ["Downloads", <Folder />, false],
  ["hashcat-6.2.5", <Folder />, false],
  ["Made in Abyss", <Folder />, false],
  ["Shota Collection", <Folder />, false],
];
const roots: [string, ReactNode][] = [
  ["OneDrive", <Cloud />],
  ["Dieser PC", <Monitor />],
  ["840 Pro (G:)", <SmallDrive />],
  ["WD MyBook 8TB (D:)", <SmallDrive />],
  ["Netzwerk", <NetworkIcon />],
];

const NavPane = () => (
  <nav className="w-[159px] shrink-0 overflow-hidden whitespace-nowrap border-r border-[#f0f0f0] pr-[2px] pt-[18px]">
    <a href="#schnellzugriff" className="flex h-6 items-center gap-[5px] pl-6"><Star />Schnellzugriff</a>
    {quick.map(([label, icon, pinned], i) => (
      <a key={i} href={`#q${i}`} className="flex h-6 items-center gap-[5px] pl-8 pr-[3px]">{icon}<span className="flex-1">{label}</span>{pinned && <Pin />}</a>
    ))}
    {roots.map(([label, icon]) => (
      <a key={label} href={`#${label}`} className={`mt-2 flex h-6 items-center gap-[5px] pl-6 ${label === "Dieser PC" ? "bg-[#d9d9d9]" : ""}`}>{icon}{label}</a>
    ))}
  </nav>
);

const folders: [string, ReactNode][] = [
  ["3D-Objekte", <g><path d="M18.500 25l11.500-3 12 3v17l-12 4-11.500-4z" fill="#31c5dc" /><path d="M18.500 25l11.500-3 12 3-12 4z" fill="#8be6ef" /><path d="M30 29l12-4v17l-12-4z" fill="#1a9bc4" /><path d="M18.500 42L30 37l12 5-12 4z" fill="#15788f" /></g>],
  ["Bilder", <g><rect x="17.500" y="20.500" width="27" height="20" fill="#fff" stroke="#999" /><rect x="19.500" y="22.500" width="23" height="16" fill="#9ecbf7" /><path d="M19.500 28c6-3 10 3 23 4v2h-23z" fill="#3f7058" /><path d="M19.500 33h23v5.500h-23z" fill="#4a78a8" /></g>],
  ["Desktop", <g><rect x="18.500" y="21.500" width="27" height="19" fill="#18a2ff" stroke="#0d6ab0" /><path d="M28 40l17-16v16z" fill="#3eb3ff" /><path d="M40 39.500h4" stroke="#fff" strokeDasharray="1 1" /></g>],
  ["Dokumente", <g><path d="M20.500 13.500H36l5 5v22H20.500z" fill="#fff" stroke="#9b9b9b" /><path d="M23 22l3-6 2 6M30 18h4M30 22h8M23 25h15" stroke="#2a8fd4" fill="none" strokeWidth="1.300" /><path d="M23 29h6M23 32h6M23 35h15M23 38h15" stroke="#9b9b9b" /><rect x="31" y="27" width="8" height="6" fill="#3f72a6" /></g>],
  ["Downloads", <g><path d="M28.500 17h8v12h7.500l-11.500 12.500L21 29h7.500z" fill="#3a97e8" stroke="#1e76c6" /></g>],
  ["Musik", <g><path d="M33 9v27" stroke="#0c97f2" strokeWidth="3" /><path d="M31.500 9c1 8 14 9 8.500 24 1-9-5-11-8-12z" fill="#0c97f2" /><ellipse cx="28" cy="36.500" rx="6.500" ry="4.800" fill="#0c97f2" /></g>],
  ["Videos", <g><rect x="19" y="13" width="24" height="28" fill="#2b2b2b" /><path d="M20.800 13v28M41.200 13v28" stroke="#ddd" strokeWidth="2" strokeDasharray="2 1.500" /><rect x="23" y="14" width="16" height="12.500" fill="#4c86d9" /><rect x="23" y="28" width="16" height="12.500" fill="#3565c0" /><circle cx="34" cy="20" r="4" fill="#e8b62a" /><path d="M32 16v8M36 16v8" stroke="#cf3a2a" strokeWidth="1.500" /><path d="M23 26v-3l4-3 5 6z" fill="#4a9a4c" /><circle cx="34" cy="30" r="3" fill="#d9452f" /><circle cx="34" cy="39" r="3" fill="#e8b62a" /></g>],
];

const drives = [
  { name: "Lokaler Datenträger (C:)", free: "138 GB frei von 465 GB", used: 70, windows: true },
  { name: "WD MyBook 8TB (D:)", free: "6,61 TB frei von 7,27 TB", used: 9, selected: true },
  { name: "HDD (E:)", free: "1,25 TB frei von 2,72 TB", used: 54 },
  { name: "840 Pro (G:)", free: "146 GB frei von 238 GB", used: 37 },
];

const GroupHeader = ({ label }: { label: string }) => (
  <h2 className="flex items-center gap-[5px] pl-[6px] text-[14px] leading-[20px] text-[#1e3287]">
    <Chevron dir="down" className="h-[11px] w-[11px] text-[#777] [stroke-width:1]" />{label}
    <span className="ml-[3px] mr-2 h-px flex-1 bg-[#e2e2e2]" />
  </h2>
);

const Content = () => (
  <main className="flex-1 pt-[12px]">
    <GroupHeader label="Ordner (7)" />
    <div className="mt-[6px] grid grid-cols-[repeat(auto-fill,250px)] gap-1 pl-[15px] pr-40">
      {folders.map(([label, art]) => (
        <a key={label} href={`#${label}`} className="flex h-[52px] gap-[4px] pl-[5px] pt-[2px]"><BigFolder>{art}</BigFolder><span className="pt-[6px] leading-[15px]">{label}</span></a>
      ))}
    </div>
    <div className="mt-[5px]"><GroupHeader label="Geräte und Laufwerke (4)" /></div>
    <div className="mt-[5px] grid grid-cols-[repeat(auto-fill,250px)] gap-1 pl-[15px] pr-40">
      {drives.map((d) => (
        <a key={d.name} href={`#${d.name}`} className={`flex h-[52px] gap-[3px] pl-[5px] ${d.selected ? "bg-[#d9d9d9]" : ""}`}>
          <BigDrive windows={d.windows} />
          <span className="w-[189px] pt-[2px] leading-[15px]">
            <span className="block pl-px">{d.name}</span>
            <span role="progressbar" aria-valuenow={d.used} className="my-[2px] block h-[13px] border border-[#bcbcbc] bg-[#e6e6e6]"><span className="block h-full bg-[#26a0da]" style={{ width: `${d.used}%` }} /></span>
            <span className="block pl-px text-[#6d6d6d]">{d.free}</span>
          </span>
        </a>
      ))}
    </div>
  </main>
);

const ExplorerWindow = () => (
  <section aria-label="Dieser PC" className="absolute bottom-[180px] left-[796px] right-0 top-[5px] flex flex-col border-b border-l border-[#7b7f84] bg-white shadow-[0_4px_18px_rgba(0,0,0,0.45)]">
    <ExplorerTop />
    <AddressRow />
    <div className="flex min-h-0 flex-1"><NavPane /><Content /></div>
    <footer className="flex h-[25px] shrink-0 items-center pl-[14px] pr-2 pt-px text-[#1e395b]">
      11 Elemente<span className="mx-[10px] h-3 w-px bg-[#eee]" />1 Element ausgewählt<span className="ml-[10px] h-3 w-px bg-[#eee]" />
      <span className="flex-1" />
      <button aria-label="Details"><svg viewBox="0 0 16 13" className="h-[13px] w-4" fill="none" stroke="#777"><path d="M.5.5h4v12h-4zM.5 4.500h4M.5 8.500h4M7 2.500h3M12 2.500h4M7 6.500h3M12 6.500h4M7 10.500h3M12 10.500h4" /></svg></button>
      <button aria-label="Große Symbole" className="ml-[6px]"><Picture className="h-4 w-[15px]" /></button>
    </footer>
  </section>
);

const ErrorDialog = () => (
  <div role="alertdialog" aria-label="Der Pfad ist nicht verfügbar." className="absolute left-[1214px] top-[517px] flex h-[163px] w-[352px] flex-col border border-[#6b6b6b] bg-white shadow-[0_4px_16px_rgba(0,0,0,0.4)]">
    <header className="flex h-[29px] items-center justify-between pl-2 pr-[10px]">Der Pfad ist nicht verfügbar.<button aria-label="Schließen"><ControlGlyph d="M0 0l10 10M10 0L0 10" /></button></header>
    <div className="flex flex-1 gap-[11px] pl-[11px] pt-[12px]">
      <svg viewBox="0 0 30 30" className="h-[30px] w-[30px]"><circle cx="15" cy="15" r="14.400" fill="#f03a17" stroke="#a32b16" strokeWidth="1" /><path d="M8 8l14 14M22 8L8 22" stroke="#fff" strokeWidth="2.400" /></svg>
      <div className="pt-1 leading-[15px]"><p>Auf D:\ kann nicht zugegriffen werden.</p><p className="mt-[15px]">Ein nicht vorhandenes Gerät wurde angegeben.</p></div>
    </div>
    <footer className="flex h-[42px] items-center justify-end border-t border-[#dfdfdf] bg-[#f0f0f0] pr-[11px]"><button className="h-[21px] w-[66px] border-2 border-[#0078d7] bg-[#e1e1e1]">OK</button></footer>
  </div>
);

/* ---------- Browser page behind the windows ---------- */

const AdMark = () => (
  <span className="flex gap-px">
    <span className="flex h-[15px] w-[15px] items-center justify-center bg-[#c9c9c9]"><svg viewBox="0 0 12 12" className="h-3 w-3" fill="none" stroke="#1cacc8" strokeWidth="1.200"><path d="M1.500 1v10L11 6zM4 4v4M6 5v2.500" /></svg></span>
    <span className="flex h-[15px] w-[15px] items-center justify-center bg-[#c9c9c9]"><svg viewBox="0 0 10 10" className="h-[10px] w-[10px]" stroke="#1cacc8" strokeWidth="1.300"><path d="M.5.5l9 9M9.500.5l-9 9" /></svg></span>
  </span>
);

const forumLinks: [string, boolean][] = [["Neue Beiträge", true], ["Beobachtete Themen", true], ["Themen finden", true], ["Mitglieder", true], ["Leserartikel", false], ["Regeln", false], ["Foren als gelesen markieren", false]];

const BrowserWindow = () => (
  <>
    <div className="absolute bottom-[52px] left-[1400px] top-[800px] w-[298px] bg-white shadow-[0_2px_8px_rgba(0,0,0,0.4)]" />
    <section aria-label="Forum" className="absolute bottom-10 left-0 top-[760px] flex w-[1682px] flex-col bg-[#b8b8c0] pt-[141px] font-[Lato,sans-serif] text-[14px] shadow-[0_2px_8px_rgba(0,0,0,0.4)]">
      <div className="flex min-h-0 flex-1">
        <div className="flex flex-1 flex-col overflow-hidden bg-[#ebebeb]">
          <header className="flex h-14 shrink-0 items-center justify-end bg-[#2a5b9c] pr-[362px] text-[16px] text-[#b9ddfd]">
            <svg viewBox="0 0 20 18" className="-mt-5 mr-6 h-[16px] w-5"><path d="M0 1h15v9H4l-3 3z" fill="#fff" /><path d="M17 4h3v10h-2v3l-3-3H7v-2h10z" fill="#fff" /></svg>
            <div className="flex h-[37px] items-stretch overflow-hidden rounded bg-[#264f87]">
              <button className="flex w-[120px] items-center gap-1 pl-[6px]">
                <svg viewBox="0 0 24 24" className="h-6 w-6"><rect width="24" height="24" fill="#3c3f45" /><path d="M4 4c8-6 18 0 19 10" stroke="#ee6a1a" strokeWidth="3" fill="none" /><path d="M6 7l12 3-2 12-11-3z" fill="#d8d5cf" /><path d="M8 12l7 2M8 15l6 2" stroke="#6a6a6a" /><path d="M1 3l3 2 1-3 2 3M18 14l4 2-2 3" stroke="#fff" fill="none" /></svg>
                Nureinnic...
              </button>
              <button aria-label="Nachrichten" className="flex w-9 items-center justify-center border-l border-[#234a80]"><svg viewBox="0 0 16 12" className="h-3 w-4"><path d="M1 0h14q1 0 1 1L8 7 0 1q0-1 1-1zM0 3l8 5.500L16 3v8q0 1-1 1H1q-1 0-1-1z" fill="#7ba0cc" /></svg></button>
              <button aria-label="Hinweise" className="flex w-9 items-center justify-center border-l border-[#234a80]"><svg viewBox="0 0 14 16" className="h-4 w-[14px]"><path d="M7 0c1 0 1.200.6 1.200 1.200C11 2 12 4.500 12 7c0 3 1 4 2 5.500H0C1 11 2 10 2 7c0-2.500 1-5 3.800-5.800C5.800.6 6 0 7 0zM5 13.500h4a2 2 0 0 1-4 0z" fill="#7ba0cc" /></svg></button>
            </div>
            <button className="ml-[7px] flex h-[37px] w-[81px] items-center justify-center gap-1 rounded bg-[#264f87]"><svg viewBox="0 0 16 16" className="h-4 w-4" fill="none" stroke="#b9ddfd"><circle cx="6.500" cy="6.500" r="5" strokeWidth="2.500" /><path d="M10.500 10.500l4.500 4.500" strokeWidth="3" /></svg>Suche</button>
          </header>
          <div className="flex h-6 shrink-0 items-center justify-end bg-[linear-gradient(135deg,#264b85_332px,#19355f_333px)] pb-px pr-[361px] text-[#7f9cc6]">
            <a href="#phones">Smartphone-Tests</a>
            <a href="#auto" className="ml-8"><b className="text-white">»</b> Automotive</a>
            <a href="#retro" className="ml-[30px]"><b className="text-white">»</b> Retro-Ecke</a>
          </div>
          <nav className="flex h-[31px] shrink-0 items-center gap-[17px] border-b border-[#cccccc] bg-[#f4f4f4] pb-[2px] pl-[343px] text-[13px] text-[#2a5b9c] shadow-[inset_0_8px_6px_-6px_rgba(0,0,0,0.2)]">
            {forumLinks.map(([l, drop]) => <a key={l} href={`#${l}`} className="flex items-center whitespace-nowrap">{l}{drop && <Caret className="ml-[10px] mr-[2px] text-[#8fb0d8]" />}</a>)}
          </nav>
          <div className="flex h-[22px] shrink-0 items-start pl-[291px] pr-[43px] pt-px"><AdMark /><span className="flex-1" /><AdMark /></div>
          <div className="flex flex-1 justify-end gap-1 pr-[362px]"><span className="w-[127px] rounded-t bg-[#2a5b9c]" /><span className="w-[151px] rounded-t bg-[#f6640f]" /></div>
        </div>
        <div className="flex w-[17px] flex-col bg-[#f0f0f0] text-[#505050]">
          <button aria-label="Nach oben scrollen" className="flex h-[17px] items-center justify-center"><Chevron dir="up" className="h-[9px] w-[9px] [stroke-width:2.400]" /></button>
          <div className="h-[90px] bg-[#cdcdcd]" />
        </div>
      </div>
    </section>
  </>
);

/* ---------- Taskbar ---------- */

const TaskButton = ({ label, state = "idle", children }: { label: string; state?: "idle" | "open" | "active"; children: ReactNode }) => (
  <button aria-label={label} className={`flex h-10 w-[49px] flex-col items-center ${state === "active" ? "border-r border-[#c5cbd3] bg-[#f4f7fa]" : ""}`}>
    <span className="flex flex-1 items-center">{children}</span>
    <span className={`h-[2px] ${state === "active" ? "w-full bg-[#0078d7]" : state === "open" ? "w-10 bg-[#0078d7]" : "w-10"}`} />
  </button>
);

const Taskbar = () => (
  <footer className="absolute inset-x-0 bottom-0 flex h-10 items-stretch bg-[linear-gradient(90deg,#e9e8e8_0px,#e6e7e8_80px,#dce4ee_130px,#e1e7ee_200px,#e9eaeb_300px,#e9eaea_970px,#dde4ee_1015px,#dfe4ee_1125px,#efe1e0_1150px,#f0e2da_1180px,#efe2dc_1320px,#e5e6e6_1345px,#dbe4ec_1440px,#e0e4e8_1600px,#d5dbea_1920px)]">
    <TaskButton label="Start"><svg viewBox="0 0 16 16" className="h-4 w-4"><path d="M0 2.300l6.800-1v6.200H0zM7.700 1.200 16 0v7.500H7.700zM0 8.500h6.800v6.200L0 13.700zM7.700 8.500H16V16l-8.300-1.200z" /></svg></TaskButton>
    <TaskButton label="Taskansicht"><svg viewBox="0 0 17 16" className="h-4 w-[17px]" fill="none" stroke="#111"><path d="M1 .5v2h10v-2M1.500 5.500h9v6h-9zM1 15.500v-2h10v2M14.500 0v3M14.500 6v10M13.500 7h2" /></svg></TaskButton>
    <TaskButton label="Edge"><svg viewBox="0 0 24 24" className="h-6 w-6"><defs><linearGradient id="edge" x1="0" y1="1" x2="1" y2="0"><stop offset="0" stopColor="#0c59a4" /><stop offset=".5" stopColor="#1f9fdc" /><stop offset="1" stopColor="#5fd05a" /></linearGradient></defs><path d="M0 12A12 12 0 0 1 24 11c0 4-3 6-6 6-4 0-4-2-3-3 2-3-1-7-5-7-5 0-9 3-10 5z" fill="url(#edge)" /><path d="M0 12c1-4 6-5 9-4-3 2-4 9 3 13 2 1 5 1 8-1A12 12 0 0 1 0 12z" fill="#0d5cb0" /><path d="M9 12c-1 5 4 9 11 7-5 6-14 4-14-3 0-3 1-4 3-4z" fill="#1478c8" /></svg></TaskButton>
    <TaskButton label="Explorer" state="active"><OpenFolder className="h-[22px] w-[22px]" /></TaskButton>
    <TaskButton label="Mail"><svg viewBox="0 0 24 22" className="h-[22px] w-6"><path d="M0 8 12 0l12 8z" fill="#0a5ca8" /><path d="M2 8h20v6H2z" fill="#f4f8fc" /><path d="M0 8l12 7 12-7v14H0z" fill="#1f94e0" /><path d="M24 8v14L8 12.500 12 15z" fill="#38b3f5" /></svg></TaskButton>
    <TaskButton label="Cocktail"><svg viewBox="0 0 24 22" className="h-[22px] w-6"><path d="M1 5h11L9 14H4z" fill="#e2453c" /><path d="M1 5h11l-1 3H2z" fill="#f5c9a8" /><path d="M6.500 14v5M3 20h8" stroke="#97a3ab" strokeWidth="1.500" /><path d="M3 0l3 6" stroke="#d14ba0" /><circle cx="10" cy="4" r="2" fill="#f08a2c" /><ellipse cx="17" cy="14" rx="5" ry="6.500" fill="#c1832a" /><path d="M14 10l6 8M20 10l-6 8" stroke="#7c501a" /><path d="M17 8c-4-3-3-6-3-6l3 3 2-5 1 5 3-2c0 3-3 5-6 5z" fill="#2f7a30" /></svg></TaskButton>
    <TaskButton label="Store"><svg viewBox="0 0 22 24" className="h-6 w-[22px]"><path d="M7 6V3q0-1.500 1.500-1.500h5Q15 1.500 15 3v3" fill="none" stroke="#2a8ad0" strokeWidth="2" /><path d="M0 6h22v15q0 2-2 2H2q-2 0-2-2z" fill="#15487e" /><path d="M6 9h4.500v4.500H6z" fill="#f25022" /><path d="M11.500 9H16v4.500h-4.500z" fill="#7fba00" /><path d="M6 14.500h4.500V19H6z" fill="#00a4ef" /><path d="M11.500 14.500H16V19h-4.500z" fill="#ffb900" /></svg></TaskButton>
    <TaskButton label="VeraCrypt"><svg viewBox="0 0 24 24" className="h-6 w-6"><path d="M5 2h14l5 10-5 10H5L0 12z" fill="#fff" /><path d="M5 8l4 7 4-8" stroke="#1b6da8" strokeWidth="2" fill="none" /><path d="M19 9c-5-3-7 6-1 5.500" stroke="#2faa8a" strokeWidth="2" fill="none" /><path d="M6 17.500h12" stroke="#555" strokeDasharray="1 .6" /></svg></TaskButton>
    <TaskButton label="Firefox" state="open"><svg viewBox="0 0 24 24" className="h-6 w-6"><defs><linearGradient id="fox" x1="1" y1="0" x2="0" y2="1"><stop offset="0" stopColor="#ffe14a" /><stop offset=".5" stopColor="#ff8a1e" /><stop offset="1" stopColor="#e8214f" /></linearGradient></defs><path d="M15 0c2 4 8 6 8 13 0 6-5 11-11 11S1 19 1 13c0-4 1-6 3-9l1 3 4-2c3 0 5-2 6-5z" fill="url(#fox)" /><circle cx="11.500" cy="13" r="5" fill="#6d3fc4" /><path d="M5 9c3 0 4 1 6 1-1 2-3 1-3 4 1 3 5 3 7 1-2 5-10 4-10-6z" fill="#ff6a2a" /></svg></TaskButton>
    <TaskButton label="Ressourcenmonitor" state="open"><svg viewBox="0 0 24 22" className="h-[22px] w-6"><path d="M1 3h8v13l-7-2z" fill="#c9cdd1" stroke="#8d9398" /><path d="M6 1h16v14H7z" fill="#d3d7da" stroke="#9aa0a6" /><path d="M8 3h12v10H9z" fill="#f5f8fa" /><path d="M9 10l3-1 1-4 3 6 2-3 2 2" stroke="#2f7fc4" fill="none" strokeWidth="1.200" /><path d="M11 15h7l2 5H10z" fill="#adb3b8" /></svg></TaskButton>
    <TaskButton label="Systemsteuerung" state="open"><svg viewBox="0 0 22 18" className="h-[18px] w-[22px]"><rect x=".5" y=".5" width="21" height="17" rx="1" fill="#8ad0f7" stroke="#4b9fd1" /><circle cx="6.500" cy="7" r="3.500" fill="#2469b0" /><path d="M6.500 7V3.500A3.500 3.500 0 0 1 10 7z" fill="#f08c2c" /><path d="M13 9V6M15.500 9V4M18 9V3" stroke="#2469b0" strokeWidth="1.500" /><path d="M3 13h9M14 13h5" stroke="#f2a43a" strokeWidth="1.500" /></svg></TaskButton>
    <TaskButton label="Computerverwaltung" state="open"><ComputerMgmt className="h-6 w-6" /></TaskButton>
    <span className="flex-1" />
    <div className="flex items-center">
      <button className="flex items-center whitespace-pre text-[13px] text-[#1c1c1c]">
        <svg viewBox="0 0 24 18" className="mr-2 h-[18px] w-6"><defs><linearGradient id="cl" x1="0" y1="0" x2="0" y2="1"><stop offset="0" stopColor="#c9dcf8" /><stop offset="1" stopColor="#7ea6e6" /></linearGradient></defs><path d="M5 16C-1 16-1 9 5 8.500 6 1 15 0 17 6.500c8-1 9 9 2 9.500z" fill="url(#cl)" /></svg>
        {"15°C   Bewölkt"}
      </button>
      <button aria-label="Ausgeblendete Symbole" className="ml-4"><svg viewBox="0 0 12 8" className="h-2 w-3" fill="none" stroke="#111" strokeWidth="1.300"><path d="M.5 7 6 1.500 11.500 7" /></svg></button>
      <button aria-label="Besprechung" className="ml-[13px]"><svg viewBox="0 0 12 16" className="h-4 w-3" fill="none" stroke="#111" strokeWidth="1.200"><path d="M2.500 2.500q3-3 6 0M2.500 13.500q3 3 6 0M1 5h7v6H1zM8 7.500 11 6v4.500L8 9z" /></svg></button>
      <button aria-label="Synchronisierung" className="ml-[9px]"><svg viewBox="0 0 17 16" className="h-4 w-[17px]" fill="none" stroke="#111" strokeWidth="1.200"><path d="M6 1.500 1 3v10h9M6 1.500h10V9M1 3l6-.5" /><path d="M5 9.500c0-4 4-4 5-2M10 5v2.500H7.500M5.500 9c1 2 3 2 4 1" /><circle cx="12.500" cy="12.500" r="3.500" fill="#2b6fb8" stroke="none" /></svg></button>
      <button aria-label="Netzwerk" className="ml-[7px]"><svg viewBox="0 0 17 14" className="h-[14px] w-[17px]" fill="none" stroke="#111" strokeWidth="1.200"><path d="M5 1.500h11v8H4.500V6M10 9.500v3.500M6.500 13.300h7M1 1h3.500v4H1zM2.700 5v3" /></svg></button>
      <button aria-label="Lautstärke" className="ml-[7px]"><svg viewBox="0 0 17 14" className="h-[14px] w-[17px]" fill="none" stroke="#111" strokeWidth="1.200"><path d="M.8 5h2.500L6.500 2v10L3.300 9H.8zM9 5q1.500 2 0 4M11.500 3q3 4 0 8M14 1.500q4 5.500 0 11" /></svg></button>
      <button className="ml-[10px] flex w-[54px] flex-col items-center text-[#111] leading-[18px]"><span>12:41</span><span>15.10.2022</span></button>
      <button aria-label="Benachrichtigungen" className="ml-[18px] mr-[13px] flex h-10 w-6 items-center"><svg viewBox="0 0 24 26" className="h-[26px] w-6"><path d="M0 2h16v13H9l-4 4v-4H0z" fill="#000" /><path d="M2.500 5.500h11M2.500 8.500h11M2.500 11.500h7" stroke="#e6e9ef" /><circle cx="15.500" cy="17" r="8" fill="#cdd0d6" fillOpacity=".92" stroke="#8e9299" /><text x="15.500" y="21" textAnchor="middle" fontSize="11" fill="#111">1</text></svg></button>
      <span className="h-10 w-1 border-l border-[#aab0bb]" />
    </div>
  </footer>
);

export default function App() {
  return (
    <div className="relative h-screen w-full overflow-hidden bg-[linear-gradient(90deg,#009fee_0%,#0090e2_25%,#0078d7_42%,#0062c8_52%,#0049b9_68%,#003fb5_90%,#0037a6_100%)] font-['Noto_Sans','Open_Sans',sans-serif] text-[11px] leading-[15px] text-black">
      <BrowserWindow />
      <a href="#papierkorb" className="absolute bottom-[98px] right-[22px] flex w-[76px] flex-col items-center gap-1 text-white [text-shadow:1px_1px_2px_#000]">
        <svg viewBox="0 0 40 44" className="h-11 w-10"><path d="M1 6l17-5 20 5-4 34-15 3-14-4z" fill="#b9c6de" fillOpacity=".85" /><path d="M1 6l17-5 20 5-17 6z" fill="#6f87bb" stroke="#e4ebf7" /><path d="M21 12l17-6-4 34-15 3z" fill="#8fa2c8" fillOpacity=".6" /><path d="M5 36l14-3 15 4-1 3-14 3-13-4z" fill="#e3e2df" /><path d="M8 20l3-4 4 1M16 19l3 5-3 3M8 23l-1 4 4 4" stroke="#0a84d8" strokeWidth="3.400" fill="none" /></svg>
        Papierkorb
      </a>
      <ManagementWindow />
      <ExplorerWindow />
      <ErrorDialog />
      <Taskbar />
    </div>
  );
}
